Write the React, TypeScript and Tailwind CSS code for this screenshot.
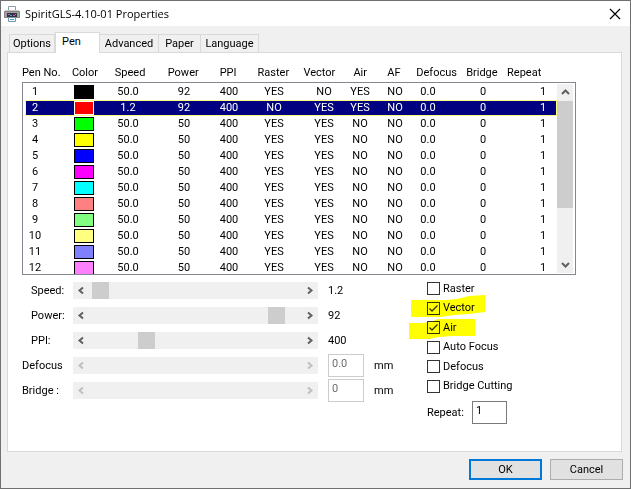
import { useState, type ReactNode } from "react";

type Pen = {
  color: string;
  speed: string;
  power: string;
  raster: string;
  vector: string;
  air: string;
};

const off = { speed: "50.0", power: "50", raster: "YES", vector: "YES", air: "NO" };

const pens: Pen[] = [
  { ...off, color: "#000000", power: "92", vector: "NO", air: "YES" },
  { ...off, color: "#ff0000", speed: "1.2", power: "92", raster: "NO", air: "YES" },
  { ...off, color: "#00ff00" },
  { ...off, color: "#ffff00" },
  { ...off, color: "#0000ff" },
  { ...off, color: "#ff00ff" },
  { ...off, color: "#00ffff" },
  { ...off, color: "#ff8080" },
  { ...off, color: "#80ff80" },
  { ...off, color: "#ffff80" },
  { ...off, color: "#8080ff" },
  { ...off, color: "#ff80ff" },
];

const headings = [
  "Pen No.", "Color", "Speed", "Power", "PPI", "Raster",
  "Vector", "Air", "AF", "Defocus", "Bridge", "Repeat",
];

const tabs = [
  { name: "Options", width: "w-[46px]" },
  { name: "Pen", width: "w-[45px]" },
  { name: "Advanced", width: "w-[59px]" },
  { name: "Paper", width: "w-[42px]" },
  { name: "Language", width: "w-[58px]" },
];

function PrinterIcon() {
  return (
    <svg width="16" height="16" viewBox="0 0 16 16" aria-hidden="true">
      <path d="M4.500 .5h7v5h-7z" fill="#fff" stroke="#8b98a5" />
      <path d="M.5 5.500h15v6H.5z" fill="#a0a0a0" stroke="#858585" />
      <path d="M1 4.500h14" stroke="#c5c5c5" />
      <path d="M3 7h10v4H3z" fill="#353046" />
      <path d="M4 8.500h2M9 9.500h2" stroke="#d052c8" />
      <path d="M6 9.500h2M11 8.500h1" stroke="#39b9b0" />
      <path d="M14 7.500h1" stroke="#4be04b" />
      <path d="M4.500 11.500h7v4h-7z" fill="#eef7ff" stroke="#7893ab" />
      <path d="M6 13.500h4" stroke="#47a5d8" />
    </svg>
  );
}

function Chevron({ dir, muted = false }: { dir: "left" | "right" | "up" | "down"; muted?: boolean }) {
  const d = {
    left: "M6 1.500L2.500 4.500L6 7.500",
    right: "M3 1.500L6.500 4.500L3 7.500",
    up: "M1 6L4.500 2.500L8 6",
    down: "M1 3L4.500 6.500L8 3",
  }[dir];
  return (
    <svg width="9" height="9" viewBox="0 0 9 9" fill="none" aria-hidden="true">
      <path d={d} stroke={muted ? "#bfbfbf" : "#606060"} strokeWidth="2" />
    </svg>
  );
}

function Scroller({ id, label, value, disabled = false }: { id: string; label: string; value: number; disabled?: boolean }) {
  const [v, setV] = useState(value);
  return (
    <div className="flex h-[17px] w-[245px] bg-[#f0f0f0]">
      <button type="button" disabled={disabled} aria-label={`Decrease ${label}`} onClick={() => setV(v - 1)} className="flex w-[17px] items-center justify-center">
        <Chevron dir="left" muted={disabled} />
      </button>
      <input
        id={id}
        type="range"
        min={0}
        max={194}
        value={v}
        disabled={disabled}
        onChange={(e) => setV(Number(e.target.value))}
        className="h-[17px] min-w-0 flex-1 appearance-none bg-transparent [&::-webkit-slider-thumb]:h-[17px] [&::-webkit-slider-thumb]:w-[17px] [&::-webkit-slider-thumb]:appearance-none [&::-webkit-slider-thumb]:bg-[#cdcdcd] disabled:[&::-webkit-slider-thumb]:bg-transparent"
      />
      <button type="button" disabled={disabled} aria-label={`Increase ${label}`} onClick={() => setV(v + 1)} className="flex w-[17px] items-center justify-center">
        <Chevron dir="right" muted={disabled} />
      </button>
    </div>
  );
}

function SettingRow({ id, label, value, indent = false, disabled = false, children }: { id: string; label: string; value: number; indent?: boolean; disabled?: boolean; children: ReactNode }) {
  return (
    <div className="flex h-[25px] items-center">
      <label htmlFor={id} className={indent ? "w-[51px] pl-[9px]" : "w-[51px]"}>{label}</label>
      <Scroller id={id} label={label} value={value} disabled={disabled} />
      <div className="flex items-center pl-[10px]">{children}</div>
    </div>
  );
}

function Check({ label, on = false }: { label: string; on?: boolean }) {
  return (
    <label className="grid grid-cols-[13px_auto] items-center justify-start gap-x-[3px]">
      <input type="checkbox" defaultChecked={on} className="peer col-start-1 row-start-1 h-[13px] w-[13px] appearance-none border border-[#333333] bg-white" />
      <svg width="13" height="13" viewBox="0 0 13 13" fill="none" aria-hidden="true" className="pointer-events-none invisible relative col-start-1 row-start-1 peer-checked:visible">
        <path d="M2.500 6.500L5 9L10.500 3.500" stroke="#333" strokeWidth="1.300" />
      </svg>
      <span className="col-start-2 row-start-1">{label}</span>
    </label>
  );
}

export default function App() {
  const [selected, setSelected] = useState(1);
  return (
    <div className="flex min-h-screen flex-col border border-[#707070] bg-[#f0f0f0] font-['Roboto','Liberation_Sans',sans-serif] text-[11px] leading-4 text-black">
      <header className="flex h-[25px] items-center bg-white pr-[9px] pl-[3px]">
        <PrinterIcon />
        <h1 className="flex-1 pl-[5px] font-['Open_Sans','Noto_Sans',sans-serif]">SpiritGLS-4.10-01 Properties</h1>
        <button type="button" aria-label="Close">
          <svg width="12" height="12" viewBox="0 0 12 12" aria-hidden="true">
            <path d="M1 1l10 10M11 1L1 11" stroke="#000" strokeWidth="1.200" />
          </svg>
        </button>
      </header>

      <main className="flex flex-1 flex-col pt-[6px] pr-[8px] pl-[6px]">
        <nav role="tablist" className="-mb-px flex items-end pl-[2px]">
          {tabs.map(({ name, width }) => (
            <button
              key={name}
              type="button"
              role="tab"
              aria-selected={name === "Pen"}
              className={`${width} ${
                name === "Pen"
                  ? "z-10 h-[21px] border border-b-0 border-[#d9d9d9] bg-white pr-[12px] pb-[2px]"
                  : "h-[19px] border border-l-0 border-[#d9d9d9] pt-px first:border-l"
              }`}
            >
              {name}
            </button>
          ))}
        </nav>

        <section className="flex-1 border border-[#d9d9d9] bg-white pt-[11px] pr-[45px] pl-[14px]">
          <div className="flex items-end">
            <table className="block min-w-0 flex-1">
              <thead className="block">
                <tr className="grid h-[18px] grid-cols-[50fr_43fr_53fr_52fr_38fr_46fr_50fr_34fr_29fr_50fr_41fr_50fr]">
                  {headings.map((h) => (
                    <th key={h} className="pt-px text-left font-normal whitespace-nowrap">{h}</th>
                  ))}
                </tr>
              </thead>
              <tbody className="block h-[193px] overflow-hidden border-y border-l border-[#828790] pt-px pl-[2px]">
                {pens.map((p, i) => {
                  const cells = [String(i + 1), "", p.speed, p.power, "400", p.raster, p.vector, p.air, "NO", "0.0", "0", "1"];
                  const sel = i === selected;
                  return (
                    <tr
                      key={i}
                      onClick={() => setSelected(i)}
                      className={`grid h-4 grid-cols-[49fr_44fr_56fr_45fr_45fr_50fr_36fr_35fr_33fr_55fr_60fr_24fr] ${sel ? "bg-[#000080] text-white outline outline-1 -outline-offset-1 outline-[#ffff80]" : ""}`}
                    >
                      {cells.map((c, j) => (
                        <td key={j} className="flex w-5 justify-center">
                          {j === 1 ? (
                            <span className={`mt-px h-[14px] w-5 border ${sel ? "border-white" : "border-black"}`} style={{ backgroundColor: p.color }} />
                          ) : (
                            <span className="leading-4">{c}</span>
                          )}
                        </td>
                      ))}
                    </tr>
                  );
                })}
              </tbody>
            </table>
            <div className="flex h-[193px] w-[19px] flex-col border-y border-r border-[#828790] py-px pr-[2px]">
              <div className="flex flex-1 flex-col bg-[#f0f0f0]">
                <button type="button" aria-label="Scroll up" className="flex h-[17px] items-center justify-center"><Chevron dir="up" /></button>
                <div className="h-[107px] bg-[#cdcdcd]" />
                <button type="button" aria-label="Scroll down" className="mt-auto flex h-[17px] items-center justify-center"><Chevron dir="down" /></button>
              </div>
            </div>
          </div>

          <div className="flex items-start justify-between pt-[3px]">
            <div>
              <SettingRow id="speed" label="Speed:" value={2} indent><output htmlFor="speed">1.2</output></SettingRow>
              <SettingRow id="power" label="Power:" value={178} indent><output htmlFor="power">92</output></SettingRow>
              <SettingRow id="ppi" label="PPI:" value={48} indent><output htmlFor="ppi">400</output></SettingRow>
              <SettingRow id="defocus" label="Defocus" value={0} disabled>
                <input disabled aria-label="Defocus distance" defaultValue="0.0" className="h-[23px] w-[36px] border border-[#cccccc] bg-white px-[3px] pb-[4px] text-[#6d6d6d]" />
                <span className="pl-[10px]">mm</span>
              </SettingRow>
              <SettingRow id="bridge" label="Bridge :" value={0} disabled>
                <input disabled aria-label="Bridge distance" defaultValue="0" className="h-[23px] w-[36px] border border-[#cccccc] bg-white px-[3px] pb-[4px] text-[#6d6d6d]" />
                <span className="pl-[10px]">mm</span>
              </SettingRow>
            </div>

            <div className="w-[149px] pt-px">
              <div className="relative grid h-[117px] grid-rows-6">
                <Check label="Raster" />
                <Check label="Vector" on />
                <Check label="Air" on />
                <Check label="Auto Focus" />
                <Check label="Defocus" />
                <Check label="Bridge Cutting" />
                <svg width="80" height="48" viewBox="0 0 80 48" aria-hidden="true" className="pointer-events-none absolute top-[15px] -left-[18px] mix-blend-multiply">
                  <path d="M2 6H37L48 5L60 2L76 1V18L60 20L45 21L32 23H2z" fill="#ffff00" />
                  <path d="M0 29H13L22 28L29 25H66V42H44L30 43L20 45H0z" fill="#ffff00" />
                </svg>
              </div>
              <div className="flex items-center pt-[5px]">
                <label htmlFor="repeat" className="w-[45px]">Repeat:</label>
                <input id="repeat" defaultValue="1" className="h-[23px] w-[35px] border border-[#7a7a7a] bg-white px-[3px] pb-[4px]" />
              </div>
            </div>
          </div>
        </section>
      </main>

      <footer className="flex justify-end gap-[8px] px-[7px] pt-[7px] pb-[8px]">
        <button type="button" className="h-[21px] w-[73px] border-2 border-[#0078d7] bg-[#e1e1e1]">OK</button>
        <button type="button" className="h-[21px] w-[73px] border border-[#adadad] bg-[#e1e1e1]">Cancel</button>
      </footer>
    </div>
  );
}
